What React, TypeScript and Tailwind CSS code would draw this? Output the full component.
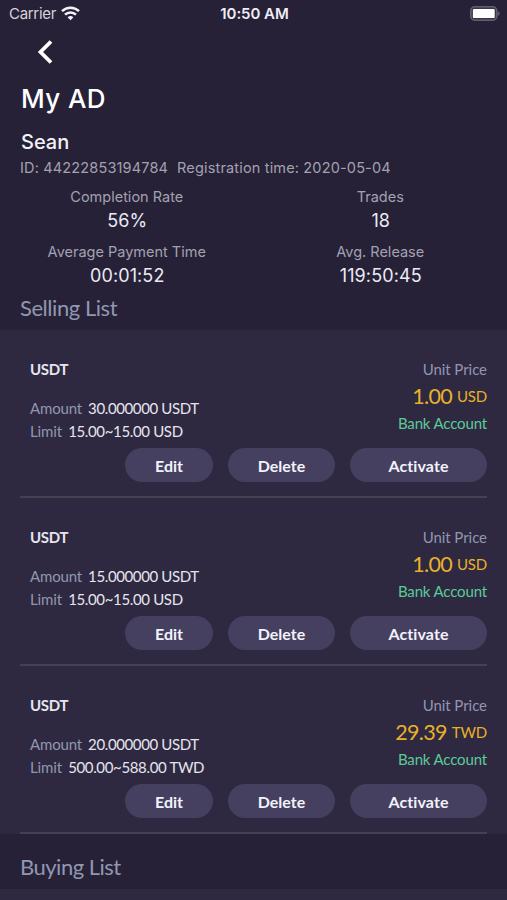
import clsx from "clsx"

const ads = [
  { id: 1, coin: "USDT", amount: "30.000000", limit: "15.00~15.00", price: "1.00", currency: "USD" },
  { id: 2, coin: "USDT", amount: "15.000000", limit: "15.00~15.00", price: "1.00", currency: "USD" },
  { id: 3, coin: "USDT", amount: "20.000000", limit: "500.00~588.00", price: "29.39", currency: "TWD" },
]

const StatusBar = () => (
  <div className="grid h-7 grid-cols-3 items-center pr-[7px] pl-[9px] text-[15px]">
    <div className="flex items-center gap-[5px] text-[#d4d3dc]">
      <span className="tracking-[-0.3px]">Carrier</span>
      <svg className="mb-0.5" width="19" height="15" viewBox="0 0 19 15" fill="none" stroke="#f4f3f8" strokeWidth="2.5">
        <path d="M1 5.2a12.2 12.2 0 0 1 17 0" />
        <path d="M4 8.700a7.900 7.900 0 0 1 11 0" />
        <path d="M9.5 14.2 6.600 11.300a4.2 4.2 0 0 1 5.800 0Z" fill="#f4f3f8" stroke="none" />
      </svg>
    </div>
    <span className="text-center font-semibold tracking-[-0.05px] whitespace-nowrap text-[#eeedf4]">10:50 AM</span>
    <svg className="mb-0.5 justify-self-end" width="31" height="15" viewBox="0 0 31 15">
      <rect x="1.800" y="0.800" width="26" height="13.4" rx="4" fill="#3a364a" stroke="#625f73" strokeWidth="1.6" />
      <rect x="3.900" y="2.900" width="21.800" height="9.2" rx="1.2" fill="#fff" />
      <path d="M28.900 5.200c2.400.8 2.400 3.800 0 4.600Z" fill="#625f73" />
    </svg>
  </div>
)

const Stat = ({ label, value }: { label: string; value: string }) => (
  <div className="flex h-[55px] flex-col items-center whitespace-nowrap">
    <span className="h-[22px] text-[14.5px] leading-[23px] text-[#a3a1b0]">{label}</span>
    <span className="h-[27px] pl-px text-[18px] leading-[27px] tracking-[0.1px] text-[#ebeaf3]">{value}</span>
  </div>
)

const Button = ({ children, className }: { children: string; className?: string }) => (
  <button className={clsx("h-[34px] rounded-full bg-[#454060] pt-px text-[16px] font-bold text-[#f3f2fa]", className)}>
    {children}
  </button>
)

const AdItem = ({ ad }: { ad: (typeof ads)[number] }) => (
  <div className="mx-5 flex h-[168px] flex-col border-b-2 border-[#454150]">
    <div className="flex h-[118px] justify-between pt-7 pl-2.5 text-[15px] text-[#e6e5ee]">
      <div>
        <div className="h-[39px] leading-[22px] font-bold tracking-[-0.3px]">{ad.coin}</div>
        <div className="flex h-[23px] gap-1.5 leading-[23px]">
          <span className="tracking-[-0.15px] text-[#9197b0]">Amount</span>
          <span className="tracking-[-0.38px]">{ad.amount} USDT</span>
        </div>
        <div className="flex h-[23px] gap-1.5 leading-[23px]">
          <span className="tracking-[-0.1px] text-[#9197b0]">Limit</span>
          <span className="tracking-[-0.35px]">
            {ad.limit} {ad.currency}
          </span>
        </div>
      </div>
      <div className="text-right">
        <div className="h-[22px] leading-[22px] tracking-[-0.05px] text-[#9197b0]">Unit Price</div>
        <div className="flex h-8 items-center justify-end gap-[5px] text-[#e9b02a]">
          <span className="text-[21.5px] tracking-[-0.7px]">{ad.price}</span>
          <span className="pt-px tracking-[-0.2px]">{ad.currency}</span>
        </div>
        <div className="h-[22px] leading-[23px] tracking-[-0.15px] text-[#5bcb97]">Bank Account</div>
      </div>
    </div>
    <div className="flex justify-end gap-[15px]">
      <Button className="w-[88px]">Edit</Button>
      <Button className="w-[107px]">Delete</Button>
      <Button className="w-[137px] tracking-[0.1px]">Activate</Button>
    </div>
  </div>
)

const App = () => {
  return (
    <div className="h-[900px] w-full overflow-hidden bg-[#262137] font-['Inter',sans-serif]">
      <StatusBar />
      <div className="flex h-12 items-center pl-[37px]">
        <svg width="16" height="24" viewBox="0 0 16 24" fill="none" stroke="#fff" strokeWidth="3.8">
          <path d="M14 1.500 3.500 12 14 22.500" />
        </svg>
      </div>
      <header className="px-5 pt-0.5">
        <h1 className="h-[50px] pl-px text-[26px] leading-[42px] font-medium tracking-[0.4px] text-white">My AD</h1>
        <h2 className="h-[28px] pl-px text-[20px] leading-[28px] font-medium text-[#f3f2f8]">Sean</h2>
        <div className="flex h-[29px] gap-[9px] text-[14.5px] leading-[23px] tracking-[0.16px] whitespace-nowrap text-[#a3a1b0]">
          <span>ID: 44222853194784</span>
          <span>Registration time: 2020-05-04</span>
        </div>
      </header>
      <div className="grid grid-cols-2">
        <Stat label="Completion Rate" value="56%" />
        <Stat label="Trades" value="18" />
        <Stat label="Average Payment Time" value="00:01:52" />
        <Stat label="Avg. Release" value="119:50:45" />
      </div>
      <div className="font-['Lato',sans-serif]">
        <h3 className="h-[35px] px-5 text-[22px] leading-[26px] tracking-[-0.45px] text-[#9197b0]">Selling List</h3>
        <div className="bg-[#2e2941]">
          {ads.map((ad) => (
            <AdItem key={ad.id} ad={ad} />
          ))}
        </div>
        <h3 className="h-[55px] px-5 text-[22px] leading-[66px] tracking-[-0.5px] text-[#9197b0]">Buying List</h3>
        <div className="h-3 bg-[#2e2941]" />
      </div>
    </div>
  )
}

export default App
